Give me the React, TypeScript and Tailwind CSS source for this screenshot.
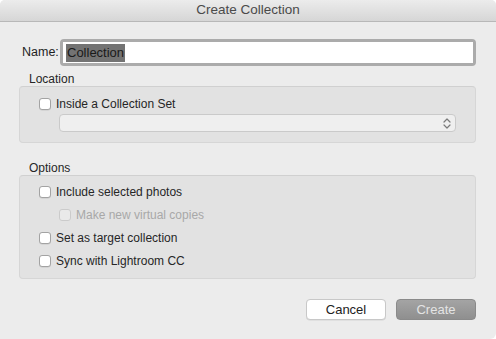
import React from "react";

function Check({ disabled = false }: { disabled?: boolean }) {
  return (
    <div
      className={
        disabled
          ? "w-[12px] h-[12px] rounded-[3px] border border-[#cbcbcb] bg-[#e9e9e9] shrink-0"
          : "w-[12px] h-[12px] rounded-[3px] border border-[#a3a3a3] bg-white shadow-[0_0.5px_0.5px_rgba(0,0,0,0.12)] shrink-0"
      }
    />
  );
}

function Row({ label, disabled = false, indent = false }: { label: string; disabled?: boolean; indent?: boolean }) {
  return (
    <div className={"flex items-center h-[16px] gap-[5px] " + (indent ? "pl-[39px]" : "pl-[19px]")}>
      <Check disabled={disabled} />
      <span className={"text-[12px] leading-[16px] " + (disabled ? "text-[#a8a8a8]" : "text-[#262626]")}>{label}</span>
    </div>
  );
}

export default function App() {
  return (
    <div className="w-[496px] h-[339px] bg-white font-['Liberation_Sans',Arial,sans-serif]">
      <div className="h-full bg-[#ececec] rounded-t-[5px] rounded-br-[6px] flex flex-col overflow-hidden">
        <div className="h-[22px] shrink-0 border-b border-[#b8b8b8] bg-gradient-to-b from-[#ececec] to-[#d6d6d6] flex items-center justify-center text-[13.5px] text-[#4a4a4a]">
          Create Collection
        </div>
        <div className="pl-[19px] pr-[20px] flex flex-col">
          <div className="mt-[17px] flex items-center h-[27px]">
            <span className="w-[44px] pl-[3px] text-[12.5px] text-[#1f1f1f]">Name:</span>
            <div className="w-[416px] h-[27px] shrink-0 rounded-[4px] bg-[#ababab] p-[3px]">
              <div className="h-[21px] bg-white flex items-center pl-[3px]">
                <span className="bg-[#737373] text-[#1a1a1a] text-[13px] leading-[18px] px-[1px]">Collection</span>
              </div>
            </div>
          </div>
          <div className="mt-[6px] pl-[10px] text-[12px] leading-[14px] text-[#262626]">Location</div>
          <div className="h-[57px] rounded-[4px] bg-[#e2e2e2] border border-[#d6d6d6] border-t-[#d0d0d0] pt-[9px] flex flex-col">
            <Row label="Inside a Collection Set" />
            <div className="mt-[2px] ml-[39px] w-[397px] h-[18px] rounded-[4px] bg-[#efefef] border border-[#cacaca] flex items-center justify-end pr-[4px]">
              <svg width="8" height="11" viewBox="0 0 8 11" fill="none" stroke="#7a7a7a" strokeWidth="1.2" strokeLinecap="round" strokeLinejoin="round">
                <path d="M1 4 L4 1 L7 4" />
                <path d="M1 7 L4 10 L7 7" />
              </svg>
            </div>
          </div>
          <div className="mt-[18px] pl-[10px] text-[12px] leading-[14px] text-[#262626]">Options</div>
          <div className="h-[104px] rounded-[4px] bg-[#e2e2e2] border border-[#d6d6d6] border-t-[#d0d0d0] pt-[8px] flex flex-col gap-[7px]">
            <Row label="Include selected photos" />
            <Row label="Make new virtual copies" disabled indent />
            <Row label="Set as target collection" />
            <Row label="Sync with Lightroom CC" />
          </div>
          <div className="mt-[20px] flex justify-end gap-[10px]">
            <div className="w-[80px] h-[21px] rounded-[4px] bg-white border border-[#c8c8c8] shadow-[0_0.5px_0.5px_rgba(0,0,0,0.1)] flex items-center justify-center text-[13px] text-[#222]">
              Cancel
            </div>
            <div className="w-[80px] h-[21px] rounded-[4px] bg-gradient-to-b from-[#a4a4a4] to-[#8f8f8f] border border-[#8a8a8a] flex items-center justify-center text-[13px] text-[#e4e4e4]">
              Create
            </div>
          </div>
        </div>
      </div>
    </div>
  );
}
